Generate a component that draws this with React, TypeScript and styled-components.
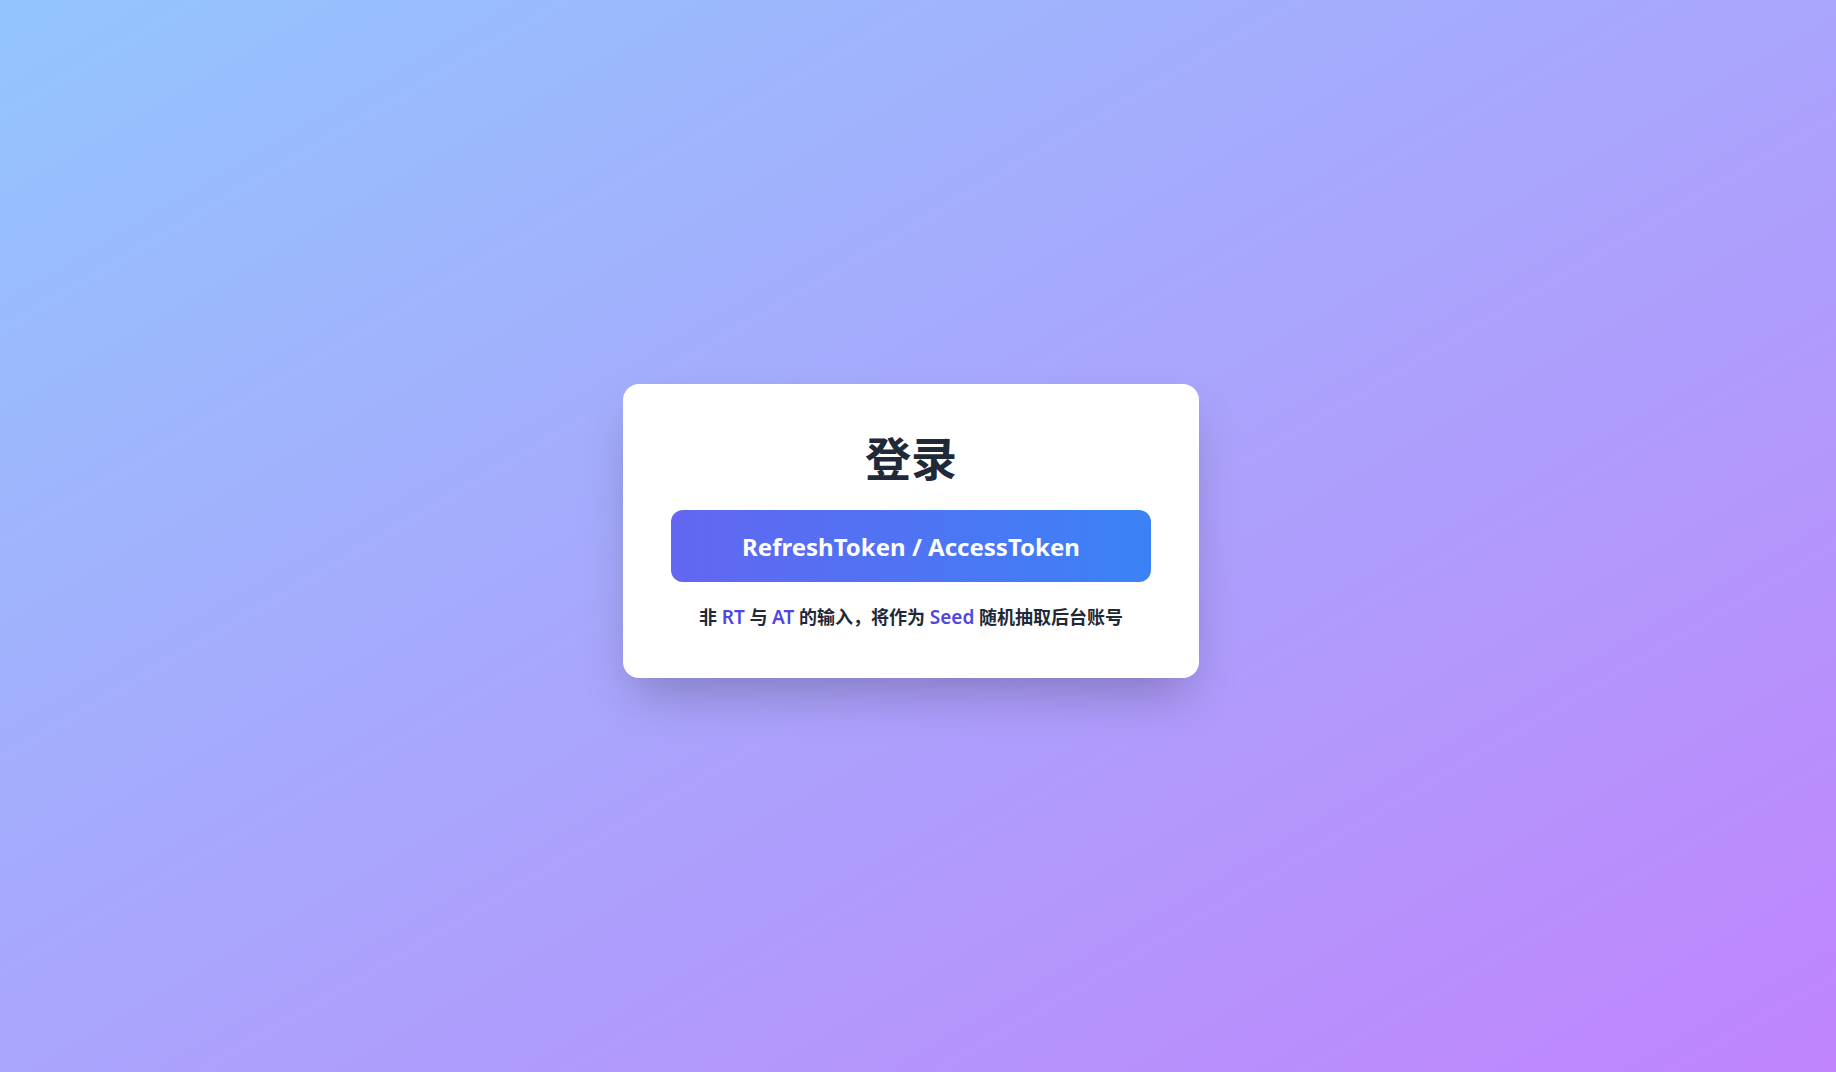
import React from "react";
import styled, { createGlobalStyle } from "styled-components";

const GlobalStyle = createGlobalStyle`
  * { box-sizing: border-box; }
  html, body { margin: 0; padding: 0; }
  body {
    font-family: "Noto Sans", "Noto Sans CJK SC", sans-serif;
    -webkit-font-smoothing: antialiased;
  }
`;

const Page = styled.div`
  min-height: 100vh;
  width: 100%;
  display: flex;
  align-items: center;
  justify-content: center;
  background: linear-gradient(to bottom right, #93c5fd, #c084fc);
  padding: 0 14px 10px 0;
`;

const Card = styled.div`
  width: 576px;
  background: #ffffff;
  border-radius: 16px;
  padding: 48px;
  box-shadow: 0 25px 50px -12px rgba(0, 0, 0, 0.25);
  display: flex;
  flex-direction: column;
  align-items: stretch;
`;

const Title = styled.h1`
  margin: 0 0 30px;
  font-family: "Noto Sans CJK SC", sans-serif;
  font-size: 46px;
  line-height: 48px;
  font-weight: 700;
  color: #1f2937;
  text-align: center;
`;

const TokenButton = styled.button`
  width: 100%;
  height: 72px;
  border: none;
  border-radius: 12px;
  background: linear-gradient(to right, #6366f1, #3b82f6);
  color: #ffffff;
  font-family: "Noto Sans", "Noto Sans CJK SC", sans-serif;
  font-size: 24px;
  font-weight: 700;
  cursor: pointer;
  display: flex;
  align-items: center;
  justify-content: center;
`;

const Hint = styled.p`
  margin: 23px 0 0;
  font-family: "Noto Sans", "Noto Sans CJK SC", sans-serif;
  font-size: 18px;
  line-height: 25px;
  font-weight: 700;
  color: #1f2937;
  text-align: center;
`;

const Accent = styled.span`
  color: #4f46e5;
  font-weight: 600;
  font-size: 19px;
`;

export default function App() {
  return (
    <>
      <GlobalStyle />
      <Page>
        <Card>
          <Title>登录</Title>
          <TokenButton>RefreshToken / AccessToken</TokenButton>
          <Hint>
            非 <Accent>RT</Accent> 与 <Accent>AT</Accent> 的输入，将作为{" "}
            <Accent>Seed</Accent> 随机抽取后台账号
          </Hint>
        </Card>
      </Page>
    </>
  );
}
